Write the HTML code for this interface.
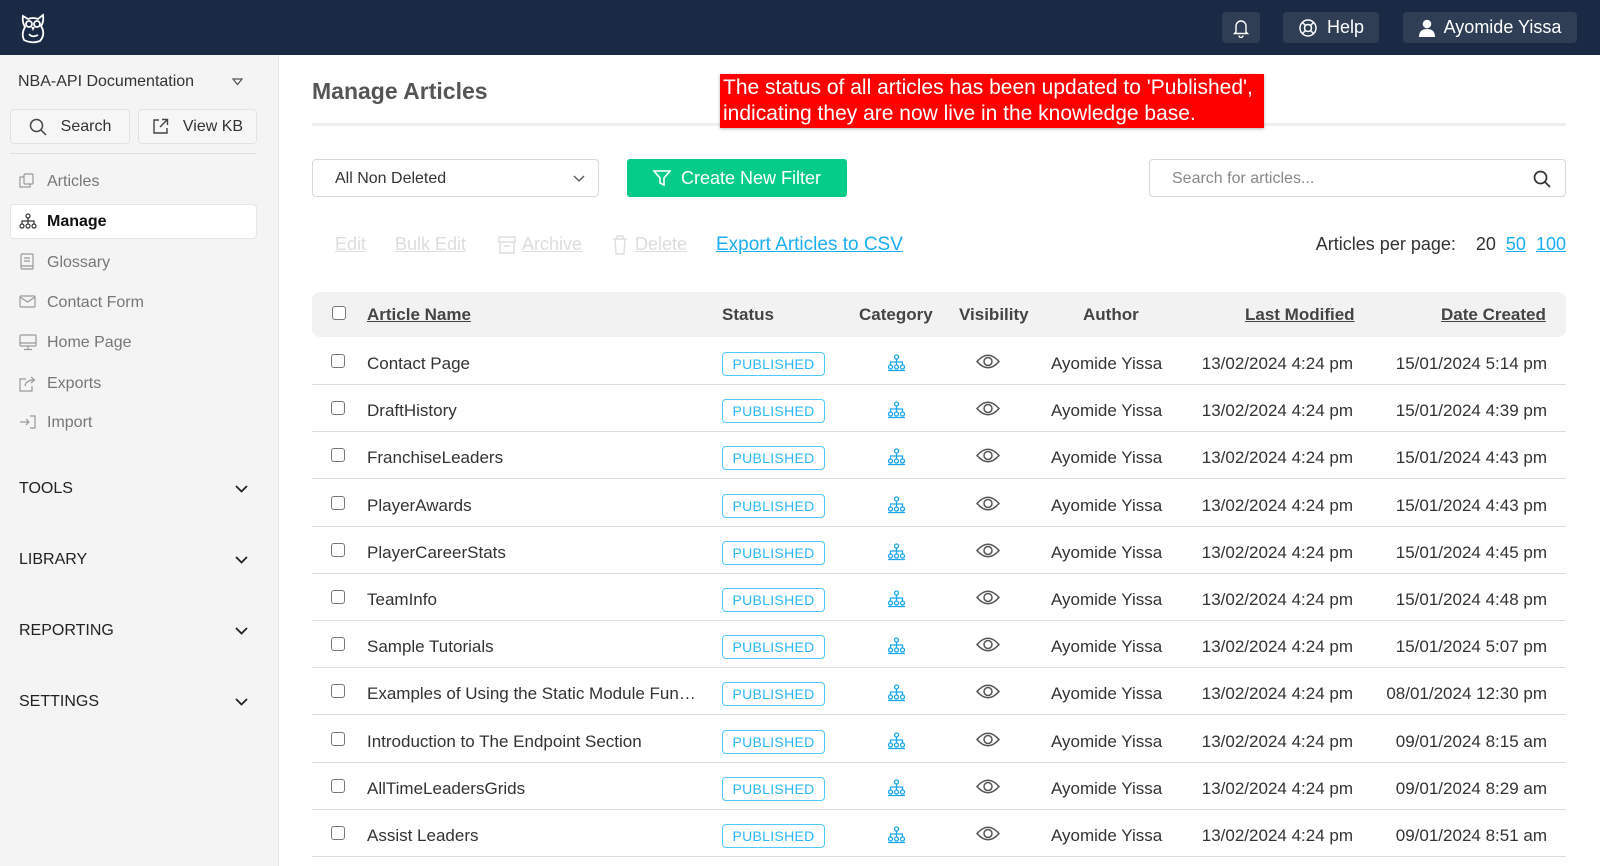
<!DOCTYPE html>
<html><head><meta charset="utf-8"><style>
*{box-sizing:border-box;margin:0;padding:0}
body{width:1600px;height:866px;overflow:hidden;font-family:"Liberation Sans",Arial,sans-serif;background:#fff;position:relative;color:#333}
.top{position:absolute;left:0;top:0;width:1600px;height:55px;background:#1a2a44}
.tb{position:absolute;top:12px;height:31px;background:#2f3e55;border-radius:4px;color:#fff;font-size:18px;display:flex;align-items:center;justify-content:center;gap:9px}
.side{position:absolute;left:0;top:55px;width:279px;height:811px;background:#f4f4f4;border-right:1px solid #e4e4e4}
.abs{position:absolute}
.sb{position:absolute;top:109px;height:35px;border:1px solid #e2e2e2;border-radius:4px;background:#f6f6f6;font-size:16px;color:#333;display:flex;align-items:center;justify-content:center;gap:14px}
.nav{position:absolute;left:47px;font-size:16px;color:#777}
.nic{position:absolute;left:19px}
.sec{position:absolute;left:19px;font-size:16px;color:#222}
.chev{position:absolute;left:235px}
.h{position:absolute;font-size:17px;color:#444;font-weight:bold}
.row{position:absolute;left:312px;width:1254px;height:47px;border-bottom:1px solid #ddd;font-size:17px;color:#333}
.row span{position:absolute;top:16px;white-space:nowrap}
.cb{position:absolute;left:19px;top:16px;width:14px;height:14px;border:1.5px solid #777;border-radius:3px;background:#fff}
.badge{position:absolute;left:410px;top:14px;width:103px;height:24px;border:1.5px solid #4fc8ff;border-radius:4px;color:#2ab7f5;font-size:14px;display:flex;align-items:center;justify-content:center;letter-spacing:.3px}
a{color:#18aef0;text-decoration:underline}
</style></head><body>
<div class="top">
 <svg class="abs" style="left:18px;top:12px" width="30" height="32" viewBox="0 0 30 32" fill="none" stroke="#fff" stroke-width="1.8"><path d="M5 4 L10 7 Q15 5 20 7 L25 3 Q26 10 23 14 Q28 22 22 29 Q14 32 6 28 Q3 22 7 15 Q4 10 5 4Z"/><circle cx="11" cy="12" r="3"/><circle cx="19" cy="12" r="3"/><path d="M14 15 L15 17 L16 15"/><path d="M11 22 Q14 26 20 23"/></svg>
 <div class="tb" style="left:1222px;width:38px"><svg width="18" height="20" viewBox="0 0 18 20" fill="none" stroke="#fff" stroke-width="1.4"><path d="M4 14 V8 a5 5 0 0 1 10 0 V14 L15.5 15.5 H2.5Z"/><path d="M7 17.5 a2 2 0 0 0 4 0"/></svg></div>
 <div class="tb" style="left:1283px;width:96px"><svg width="20" height="20" viewBox="0 0 20 20" fill="none" stroke="#fff" stroke-width="1.5"><circle cx="10" cy="10" r="8"/><circle cx="10" cy="10" r="3.5"/><path d="M4.3 4.3 L7.5 7.5 M15.7 4.3 L12.5 7.5 M4.3 15.7 L7.5 12.5 M15.7 15.7 L12.5 12.5"/></svg>Help</div>
 <div class="tb" style="left:1403px;width:174px"><svg width="16" height="18" viewBox="0 0 16 18" fill="#fff"><circle cx="8" cy="5" r="4.3"/><path d="M0 18 Q0 10 8 10 Q16 10 16 18Z"/></svg>Ayomide Yissa</div>
</div>
<div class="side">
 <div class="abs" style="left:18px;top:18px;font-size:16px;color:#333">NBA-API Documentation</div>
 <svg class="abs" style="left:232px;top:23px" width="11" height="8" viewBox="0 0 11 8" fill="none" stroke="#555" stroke-width="1.2"><path d="M1 1 H10 L5.5 6.5Z"/></svg>
 <div class="sb" style="left:10px;top:54px;width:120px"><svg width="18" height="18" viewBox="0 0 18 18" fill="none" stroke="#444" stroke-width="1.5"><circle cx="7.5" cy="7.5" r="6"/><path d="M12 12 L17 17"/></svg>Search</div>
 <div class="sb" style="left:138px;top:54px;width:119px"><svg width="17" height="17" viewBox="0 0 17 17" fill="none" stroke="#444" stroke-width="1.4"><path d="M7 2 H2 V15 H15 V10"/><path d="M10 1.5 H15.5 V7 M15.5 1.5 L8 9"/></svg>View KB</div>
 <div class="abs" style="left:10px;top:98px;width:247px;height:1px;background:#e0e0e0"></div>
 <div class="abs" style="left:10px;top:149px;width:247px;height:35px;background:#fff;border:1px solid #e6e6e6;border-radius:4px"></div>
 <svg class="nic" style="top:118px" width="16" height="16" viewBox="0 0 16 16" fill="none" stroke="#999" stroke-width="1.2"><path d="M5 4 H1 V14 H11 V11"/><rect x="5" y="1" width="9" height="10" rx="1"/></svg>
 <div class="nav" style="top:118px">Articles</div>
 <svg class="nic" style="top:158px" width="18" height="16" viewBox="0 0 18 16" fill="none" stroke="#333" stroke-width="1.2"><circle cx="9" cy="3" r="2"/><path d="M9 5 V8 M3 11 V8 H15 V11 M9 8 V11"/><circle cx="3" cy="13" r="2"/><circle cx="9" cy="13" r="2"/><circle cx="15" cy="13" r="2"/></svg>
 <div class="nav" style="top:158px;color:#111;font-weight:bold">Manage</div>
 <svg class="nic" style="top:198px" width="16" height="17" viewBox="0 0 16 17" fill="none" stroke="#999" stroke-width="1.2"><rect x="2" y="1" width="12" height="15" rx="1"/><path d="M5 5 H11 M5 8 H11 M2 13 H14"/></svg>
 <div class="nav" style="top:199px">Glossary</div>
 <svg class="nic" style="top:240px" width="17" height="13" viewBox="0 0 17 13" fill="none" stroke="#999" stroke-width="1.2"><rect x="1" y="1" width="15" height="11" rx="1"/><path d="M1 2 L8.5 7 L16 2"/></svg>
 <div class="nav" style="top:239px">Contact Form</div>
 <svg class="nic" style="top:279px" width="18" height="17" viewBox="0 0 18 17" fill="none" stroke="#999" stroke-width="1.2"><rect x="1" y="1" width="16" height="11" rx="1"/><path d="M1 9 H17 M9 12 V15 M5 15.5 H13"/></svg>
 <div class="nav" style="top:279px">Home Page</div>
 <svg class="nic" style="top:320px" width="18" height="17" viewBox="0 0 18 17" fill="none" stroke="#999" stroke-width="1.2"><path d="M7 4 H1 V16 H13 V11"/><path d="M6 11 Q7 5 15 5 M12 2 L15.5 5 L12 8"/></svg>
 <div class="nav" style="top:320px">Exports</div>
 <svg class="nic" style="top:359px" width="18" height="16" viewBox="0 0 18 16" fill="none" stroke="#999" stroke-width="1.2"><path d="M1 8 H10 M7 5 L10 8 L7 11"/><path d="M11 2 H16 V14 H11"/></svg>
 <div class="nav" style="top:359px">Import</div>
 <div class="sec" style="top:425px">TOOLS</div>
 <div class="sec" style="top:496px">LIBRARY</div>
 <div class="sec" style="top:567px">REPORTING</div>
 <div class="sec" style="top:638px">SETTINGS</div>
 <svg class="chev" style="top:430px" width="13" height="8" viewBox="0 0 13 8" fill="none" stroke="#222" stroke-width="1.8"><path d="M1 1 L6.5 6.5 L12 1"/></svg>
 <svg class="chev" style="top:501px" width="13" height="8" viewBox="0 0 13 8" fill="none" stroke="#222" stroke-width="1.8"><path d="M1 1 L6.5 6.5 L12 1"/></svg>
 <svg class="chev" style="top:572px" width="13" height="8" viewBox="0 0 13 8" fill="none" stroke="#222" stroke-width="1.8"><path d="M1 1 L6.5 6.5 L12 1"/></svg>
 <svg class="chev" style="top:643px" width="13" height="8" viewBox="0 0 13 8" fill="none" stroke="#222" stroke-width="1.8"><path d="M1 1 L6.5 6.5 L12 1"/></svg>
</div>

<div class="abs" style="left:312px;top:78px;font-size:23px;color:#555;font-weight:bold">Manage Articles</div>
<div class="abs" style="left:312px;top:123px;width:1254px;height:3px;background:#eee"></div>
<div class="abs" style="left:720px;top:74px;width:544px;height:54px;background:#f00;color:#fff;font-size:21px;line-height:26px;padding:1px 3px;box-shadow:0 1px 3px rgba(0,0,0,.3);white-space:nowrap">The status of all articles has been updated to 'Published',<br>indicating they are now live in the knowledge base.</div>

<div class="abs" style="left:312px;top:159px;width:287px;height:38px;border:1px solid #d8d8d8;border-radius:4px;font-size:16px;color:#333;padding:10px 0 0 22px">All Non Deleted</div>
<svg class="abs" style="left:573px;top:175px" width="12" height="7" viewBox="0 0 12 7" fill="none" stroke="#555" stroke-width="1.3"><path d="M1 1 L6 6 L11 1"/></svg>
<div class="abs" style="left:627px;top:159px;width:220px;height:38px;background:#06cc8a;border-radius:3px;color:#fff;font-size:18px;display:flex;align-items:center;justify-content:center;gap:10px"><svg width="18" height="18" viewBox="0 0 18 18" fill="none" stroke="#fff" stroke-width="1.6"><path d="M1 2 H17 L11 9 V16 L7 14 V9Z"/></svg>Create New Filter</div>
<div class="abs" style="left:1149px;top:159px;width:417px;height:38px;border:1px solid #d8d8d8;border-radius:4px;font-size:16px;color:#888;padding:10px 0 0 22px">Search for articles...</div>
<svg class="abs" style="left:1533px;top:170px" width="18" height="18" viewBox="0 0 18 18" fill="none" stroke="#333" stroke-width="1.7"><circle cx="7.5" cy="7.5" r="6"/><path d="M12 12 L17 17"/></svg>

<div class="abs" style="left:335px;top:234px;font-size:18px;color:#ddd"><u>Edit</u></div>
<div class="abs" style="left:395px;top:234px;font-size:18px;color:#ddd"><u>Bulk Edit</u></div>
<svg class="abs" style="left:498px;top:236px" width="18" height="18" viewBox="0 0 18 18" fill="none" stroke="#ddd" stroke-width="1.4"><rect x="1" y="1" width="16" height="5"/><path d="M2 6 V17 H16 V6 M6 10 H12"/></svg>
<div class="abs" style="left:522px;top:234px;font-size:18px;color:#ddd"><u>Archive</u></div>
<svg class="abs" style="left:612px;top:235px" width="16" height="20" viewBox="0 0 16 20" fill="none" stroke="#ddd" stroke-width="1.4"><path d="M1 4 H15 M5 4 V1 H11 V4 M3 4 L4 19 H12 L13 4"/></svg>
<div class="abs" style="left:635px;top:234px;font-size:18px;color:#ddd"><u>Delete</u></div>
<div class="abs" style="left:716px;top:234px;font-size:19px"><a>Export Articles to CSV</a></div>
<div class="abs" style="right:34px;top:234px;font-size:18px;color:#333">Articles per page:&nbsp;&nbsp;&nbsp; 20&nbsp;&nbsp;<a>50</a>&nbsp;&nbsp;<a>100</a></div>

<div class="abs" style="left:312px;top:292px;width:1254px;height:45px;background:#f2f2f2;border-radius:8px"></div>
<div class="abs" style="left:332px;top:306px;width:14px;height:14px;border:1.5px solid #777;border-radius:3px;background:#fff"></div>
<div class="h" style="left:367px;top:305px"><u>Article Name</u></div>
<div class="h" style="left:722px;top:305px">Status</div>
<div class="h" style="left:859px;top:305px">Category</div>
<div class="h" style="left:959px;top:305px">Visibility</div>
<div class="h" style="left:1083px;top:305px">Author</div>
<div class="h" style="left:1245px;top:305px"><u>Last Modified</u></div>
<div class="h" style="left:1441px;top:305px"><u>Date Created</u></div>

<div id="rows"></div>
<script>
var d=[["Contact Page","15/01/2024 5:14 pm"],["DraftHistory","15/01/2024 4:39 pm"],["FranchiseLeaders","15/01/2024 4:43 pm"],["PlayerAwards","15/01/2024 4:43 pm"],["PlayerCareerStats","15/01/2024 4:45 pm"],["TeamInfo","15/01/2024 4:48 pm"],["Sample Tutorials","15/01/2024 5:07 pm"],["Examples of Using the Static Module Fun…","08/01/2024 12:30 pm"],["Introduction to The Endpoint Section","09/01/2024 8:15 am"],["AllTimeLeadersGrids","09/01/2024 8:29 am"],["Assist Leaders","09/01/2024 8:51 am"]];
var h="";
d.forEach(function(r,i){var t=338+i*47.2;
h+='<div class="row" style="top:'+t+'px"><div class="cb"></div><span style="left:55px">'+r[0]+'</span><div class="badge">PUBLISHED</div>'+
'<svg style="position:absolute;left:575px;top:16px" width="19" height="18" viewBox="0 0 19 18" fill="none" stroke="#1aa7ec" stroke-width="1.3"><circle cx="9.5" cy="3" r="2"/><path d="M9.5 5 V8 M3.5 11 V8 H15.5 V11 M9.5 8 V11"/><circle cx="3.5" cy="13" r="2"/><circle cx="9.5" cy="13" r="2"/><circle cx="15.5" cy="13" r="2"/><path d="M1 16.5 H18"/></svg>'+
'<svg style="position:absolute;left:664px;top:15px" width="24" height="17" viewBox="0 0 24 17" fill="none" stroke="#555" stroke-width="1.5"><path d="M1 8.5 Q12 -4 23 8.5 Q12 21 1 8.5Z"/><circle cx="12" cy="8.5" r="4"/></svg>'+
'<span style="left:739px">Ayomide Yissa</span><span style="right:213px">13/02/2024 4:24 pm</span><span style="right:19px">'+r[1]+'</span></div>';});
document.getElementById("rows").innerHTML=h;
</script>
</body></html>
